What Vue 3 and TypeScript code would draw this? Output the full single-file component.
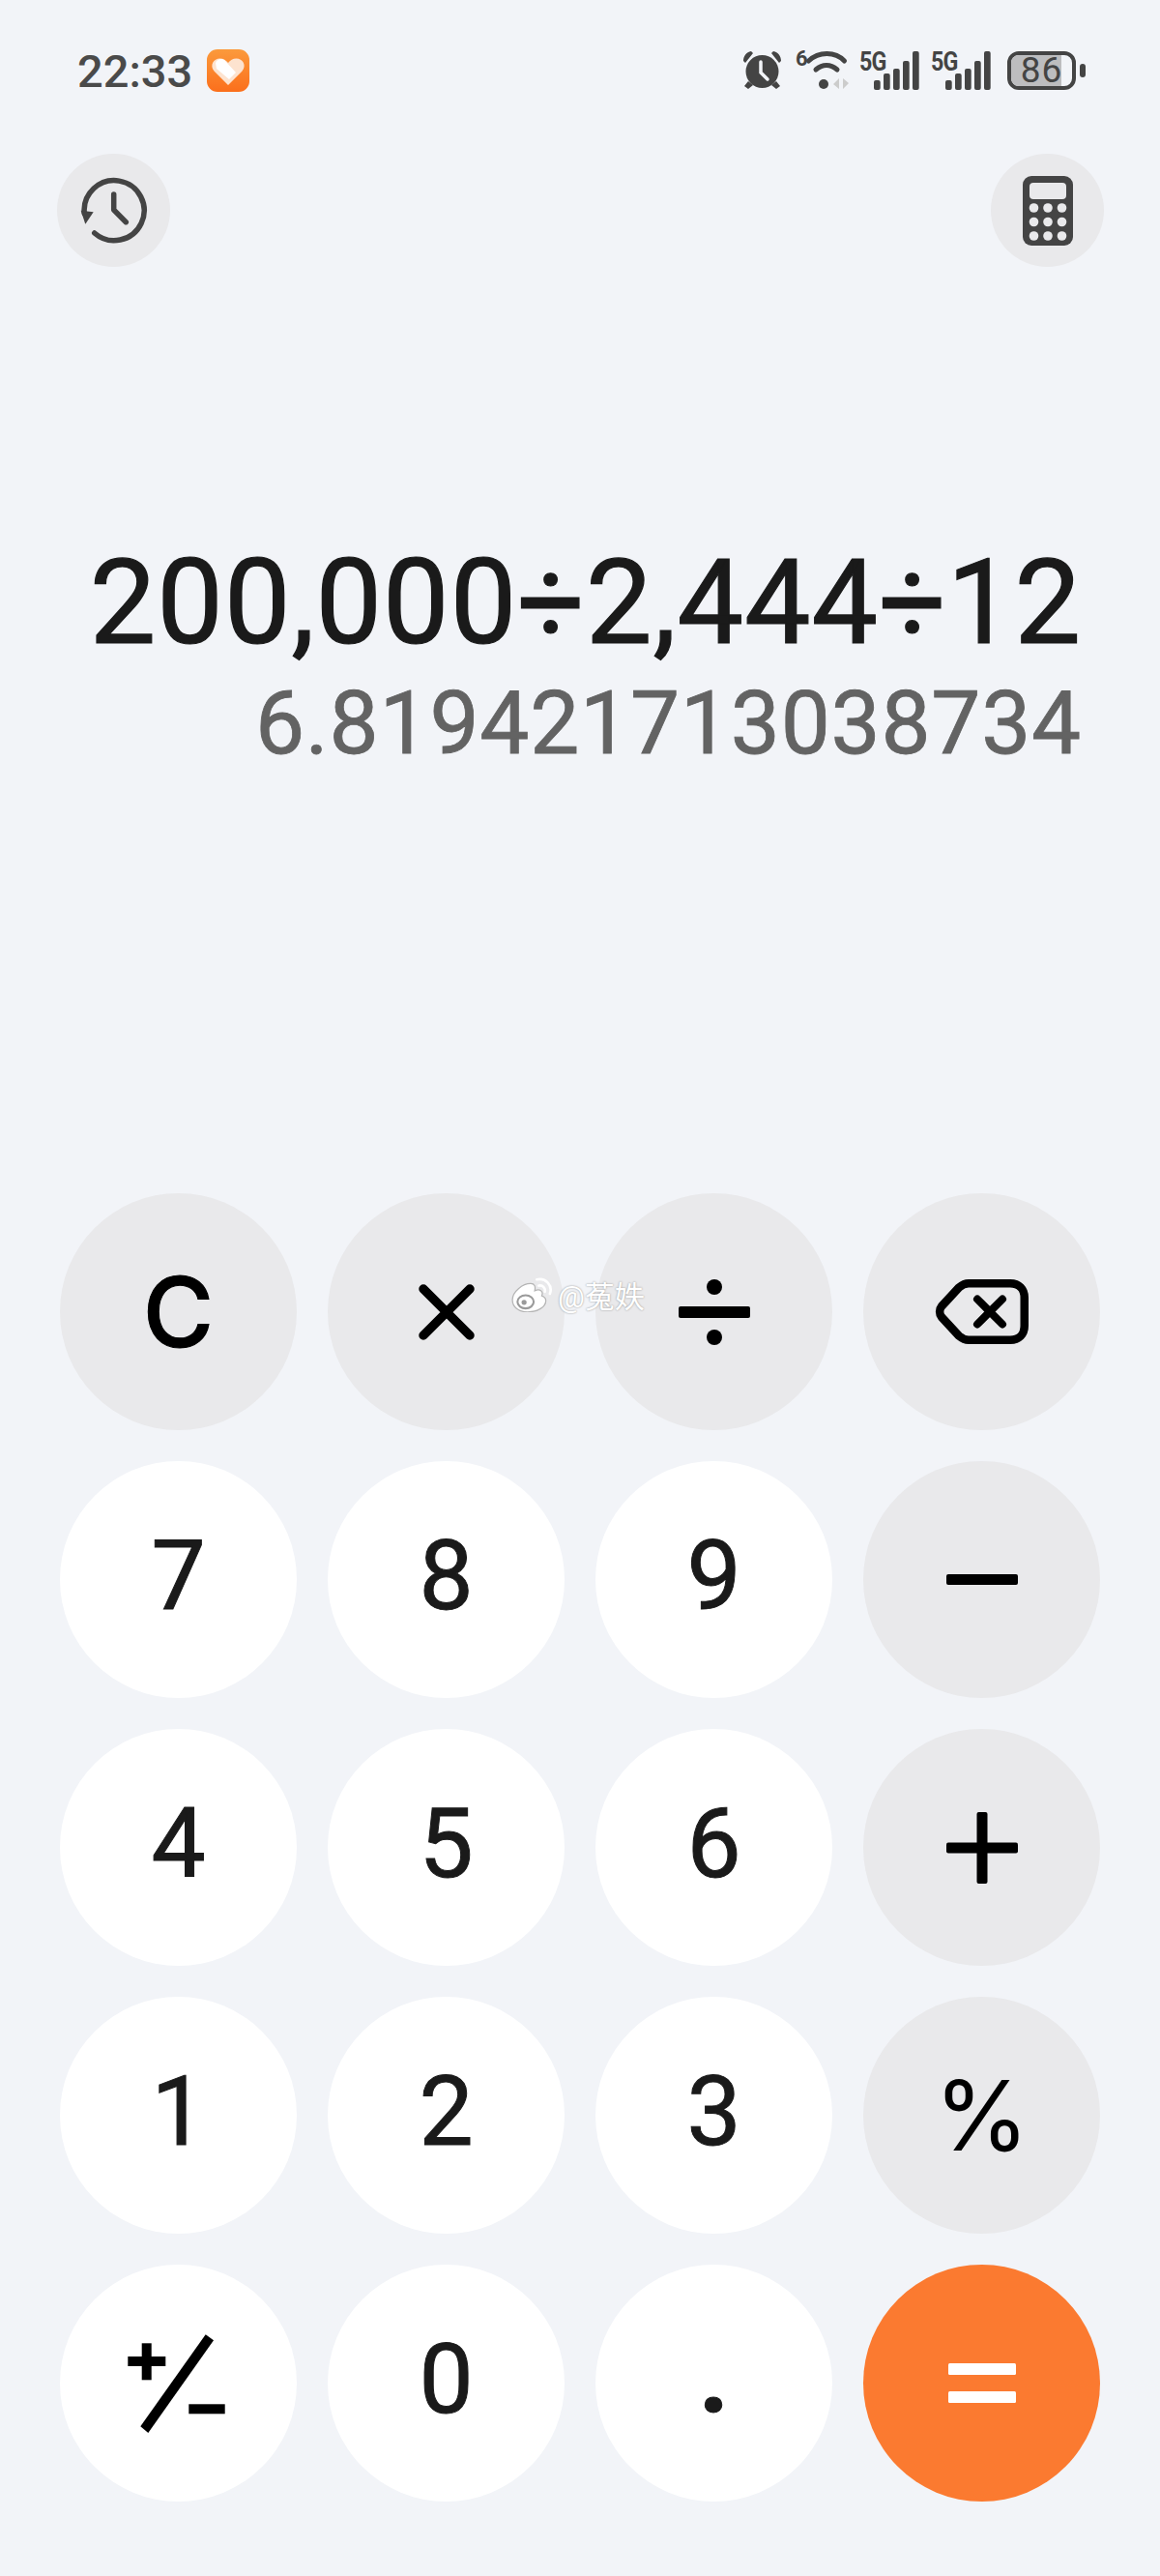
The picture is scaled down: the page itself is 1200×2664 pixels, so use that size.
<script setup lang="ts">
interface Key {
  label: string
  kind: 'num' | 'op' | 'eq'
  icon?: string
  font?: string
}

const keys: Key[] = [
  { label: 'C', kind: 'op', font: 'inter clear' },
  { label: '', kind: 'op', icon: 'times' },
  { label: '', kind: 'op', icon: 'divide' },
  { label: '', kind: 'op', icon: 'back' },
  { label: '7', kind: 'num' },
  { label: '8', kind: 'num' },
  { label: '9', kind: 'num' },
  { label: '', kind: 'op', icon: 'minus' },
  { label: '4', kind: 'num' },
  { label: '5', kind: 'num' },
  { label: '6', kind: 'num' },
  { label: '', kind: 'op', icon: 'plus' },
  { label: '1', kind: 'num' },
  { label: '2', kind: 'num' },
  { label: '3', kind: 'num' },
  { label: '%', kind: 'op', font: 'inter' },
  { label: '', kind: 'num', icon: 'sign' },
  { label: '0', kind: 'num' },
  { label: '.', kind: 'num', font: 'dot' },
  { label: '', kind: 'eq', icon: 'equals' }
]
</script>

<template>
  <div class="screen">
    <div class="status">
      <div class="status-left">
        <span class="time">22:33</span>
        <svg width="44" height="44" viewBox="0 0 44 44">
          <defs>
            <linearGradient id="hg" x1="0" y1="0" x2="0" y2="1">
              <stop offset="0" stop-color="#fb9a3c" />
              <stop offset="1" stop-color="#fb6f1c" />
            </linearGradient>
          </defs>
          <rect width="44" height="44" rx="11" fill="url(#hg)" />
          <path d="M22 37 L7.500 22.500 C2.500 16.500 7 9.500 13.500 9.500 C17 9.500 20 11.500 22 14 C24 11.500 27 9.500 30.500 9.500 C37 9.500 41.500 16.500 36.500 22.500 Z" fill="#fde3cf" />
          <path d="M9 14 C11 9.500 16 9 19 12 L30 24 L23 31 L10 20 Z" fill="#fff" />
        </svg>
      </div>
      <div class="status-right">
        <svg class="alarm" width="41" height="40" viewBox="0 0 41 40" fill="#444">
          <circle cx="20.500" cy="21" r="17" />
          <path d="M1 10 C1 5 4 1 9 0 L11 2 L3 12 Z M40 10 C40 5 37 1 32 0 L30 2 L38 12 Z" />
          <path d="M6 31 L2 36 L6 39 L11 35 Z M35 31 L39 36 L35 39 L30 35 Z" />
          <path d="M19 11 V22 L26 29" fill="none" stroke="#f2f4f8" stroke-width="3.500" stroke-linecap="round" />
        </svg>
        <svg class="wifi" width="56" height="48" viewBox="0 -6 56 48" fill="none">
          <text x="0" y="17" class="mini">6</text>
          <path d="M13.500 12 C24 2 41 2 50.500 12" stroke="#444" stroke-width="5" stroke-linecap="round" />
          <path d="M21 21 C28 15 36 15 43 21" stroke="#444" stroke-width="5" stroke-linecap="round" />
          <circle cx="29" cy="36" r="5" fill="#444" />
          <path d="M45 30 V41 L39 36 Z M49 30 V41 L55 35 Z" fill="#ccc" />
        </svg>
        <div class="sim">
          <span class="five-g">5G</span>
          <svg width="47" height="40" viewBox="0 0 47 40" fill="#444">
            <rect x="0" y="30" width="6.700" height="10" rx="2" />
            <rect x="10" y="23" width="6.700" height="17" rx="2" />
            <rect x="20" y="18" width="6.700" height="22" rx="2" />
            <rect x="30" y="10" width="6.700" height="30" rx="2" />
            <rect x="40" y="0" width="6.700" height="40" rx="2" />
          </svg>
        </div>
        <div class="sim">
          <span class="five-g">5G</span>
          <svg width="47" height="40" viewBox="0 0 47 40" fill="#444">
            <rect x="0" y="30" width="6.700" height="10" rx="2" />
            <rect x="10" y="23" width="6.700" height="17" rx="2" />
            <rect x="20" y="18" width="6.700" height="22" rx="2" />
            <rect x="30" y="10" width="6.700" height="30" rx="2" />
            <rect x="40" y="0" width="6.700" height="40" rx="2" />
          </svg>
        </div>
        <div class="battery">
          <div class="battery-body">
            <div class="battery-fill"></div>
            <span class="battery-text">86</span>
          </div>
          <div class="battery-cap"></div>
        </div>
      </div>
    </div>

    <div class="top-actions">
      <button class="round-btn">
        <svg width="70" height="70" viewBox="0 0 70 70" fill="none" stroke="#444" stroke-width="5.500">
          <path d="M14.700 58 A31 31 0 1 0 4.300 38" stroke-linecap="round" />
          <path d="M0.700 34.700 L13.700 36.300 L5.300 48.700 Z" fill="#444" stroke="none" />
          <path d="M34.700 18 V34 L47.300 46.700" stroke-linecap="round" stroke-linejoin="round" />
        </svg>
      </button>
      <button class="round-btn">
        <svg width="52" height="72" viewBox="0 0 52 72">
          <rect width="52" height="72" rx="9" fill="#444" />
          <rect x="7" y="7" width="38" height="17" rx="4" fill="#e9e9eb" />
          <g fill="#e9e9eb">
            <circle cx="11.500" cy="33" r="4.800" /><circle cx="26" cy="33" r="4.800" /><circle cx="40.500" cy="33" r="4.800" />
            <circle cx="11.500" cy="47.500" r="4.800" /><circle cx="26" cy="47.500" r="4.800" /><circle cx="40.500" cy="47.500" r="4.800" />
            <circle cx="11.500" cy="62" r="4.800" /><circle cx="26" cy="62" r="4.800" /><circle cx="40.500" cy="62" r="4.800" />
          </g>
        </svg>
      </button>
    </div>

    <div class="display">
      <div class="expr">200,000÷2,444÷12</div>
      <div class="result">6.819421713038734</div>
    </div>

    <div class="pad">
      <button v-for="(key, i) in keys" :key="i" class="key" :class="[key.kind, key.font]">
        <template v-if="key.label">{{ key.label }}</template>
        <svg v-else-if="key.icon === 'times'" width="58" height="60" viewBox="0 0 58 60" stroke="#000" stroke-width="9.500" stroke-linecap="round">
          <path d="M5 6 L53 54 M53 6 L5 54" />
        </svg>
        <svg v-else-if="key.icon === 'divide'" width="74" height="68" viewBox="0 0 74 68" fill="#000">
          <circle cx="37" cy="8" r="8" />
          <rect x="0" y="28" width="74" height="12" rx="2" />
          <circle cx="37" cy="60" r="8" />
        </svg>
        <svg v-else-if="key.icon === 'back'" width="97" height="67" viewBox="0 0 97 67" fill="none" stroke="#000" stroke-width="8.500" stroke-linejoin="round">
          <path d="M35 4.250 H78 C87 4.250 92.750 10 92.750 19 V48 C92.750 57 87 62.750 78 62.750 H35 C31 62.750 28 61 25 58.500 L7 39 C4.500 36 4.500 31 7 28 L25 8.500 C28 6 31 4.250 35 4.250 Z" />
          <path d="M44 20.500 L70 46.500 M70 20.500 L44 46.500" stroke-width="8" stroke-linecap="round" />
        </svg>
        <svg v-else-if="key.icon === 'minus'" width="74" height="11" viewBox="0 0 74 11" fill="#000">
          <rect width="74" height="11" rx="2" />
        </svg>
        <svg v-else-if="key.icon === 'plus'" width="74" height="74" viewBox="0 0 74 74" fill="#000">
          <rect y="31.500" width="74" height="11" rx="2" />
          <rect x="31.500" width="11" height="74" rx="2" />
        </svg>
        <svg v-else-if="key.icon === 'sign'" width="106" height="102" viewBox="0 0 106 102" fill="#000">
          <rect x="0.300" y="23" width="39" height="10" />
          <rect x="14.700" y="9.300" width="10" height="38" />
          <path d="M80.700 0.300 L89 6.300 L21.300 102 L13.300 95.300 Z" />
          <rect x="63.300" y="72.300" width="37.400" height="10" />
        </svg>
        <svg v-else-if="key.icon === 'equals'" width="70" height="41" viewBox="0 0 70 41" fill="#fff">
          <rect width="70" height="12" rx="1.500" />
          <rect y="29" width="70" height="12" rx="1.500" />
        </svg>
      </button>
      <div class="watermark">
        <svg width="44" height="36" viewBox="0 0 42 34">
          <path d="M2 22 C2 14 12 6 20 6 C24 6 25 9 24 13 C29 11 33 13 31 18 C34 19 35 21 35 23 C35 29 27 34 17 34 C8 34 2 29 2 22 Z" fill="#fff" stroke="#b5b5b5" stroke-width="1.200" />
          <ellipse cx="15" cy="24" rx="8" ry="6.500" fill="none" stroke="#9a9a9a" stroke-width="2" />
          <circle cx="13.500" cy="24.500" r="2.500" fill="#9a9a9a" />
          <path d="M26 2 C35 0 42 8 39 16 M28 8 C32 7 35 11 34 14" fill="none" stroke="#fff" stroke-width="2.500" stroke-linecap="round" />
        </svg>
        <span>@菟妷</span>
      </div>
    </div>
  </div>
</template>

<style>
html, body {
  margin: 0;
  background: #f2f4f8;
}
</style>

<style scoped>
.screen {
  position: relative;
  width: 1200px;
  height: 2664px;
  background: #f2f4f8;
  font-family: Roboto, "Noto Sans CJK SC", sans-serif;
  color: #1a1a1a;
  overflow: hidden;
}

.status {
  height: 46px;
  padding: 50px 0 0 80px;
  display: flex;
  justify-content: space-between;
  align-items: center;
}

.status-left {
  display: flex;
  align-items: center;
  gap: 15px;
}

.time {
  font-size: 47px;
  font-weight: 500;
  color: #4a4a4a;
}

.status-right {
  display: flex;
  align-items: center;
  gap: 12px;
  padding-right: 77px;
}

.alarm {
  margin-right: 2px;
}

.wifi {
  margin-right: -2px;
  margin-top: -8px;
}

.mini {
  font: 700 22px Roboto, sans-serif;
  fill: #444;
}

.sim {
  position: relative;
  width: 62px;
  height: 40px;
  display: flex;
  justify-content: flex-end;
}

.five-g {
  position: absolute;
  left: 0;
  top: -5px;
  font-size: 27px;
  font-weight: 700;
  color: #444;
  letter-spacing: -1px;
  transform: scaleX(0.86);
  transform-origin: left top;
}

.battery {
  margin-left: 5px;
  display: flex;
  align-items: center;
  gap: 4px;
}

.battery-body {
  position: relative;
  width: 71px;
  height: 40px;
  box-sizing: border-box;
  border: 4px solid #444;
  border-radius: 12px;
}

.battery-fill {
  width: 83%;
  height: 100%;
  border-radius: 8px 0 0 8px;
  background: #bdbdbf;
}

.battery-text {
  position: absolute;
  top: -6px;
  left: 0;
  right: 0;
  text-align: center;
  font-size: 37px;
  line-height: 44px;
  color: #444;
  letter-spacing: 1px;
}

.battery-cap {
  width: 6px;
  height: 14px;
  border-radius: 3px;
  background: #444;
}

.top-actions {
  margin-top: 63px;
  padding: 0 58px 0 59px;
  display: flex;
  justify-content: space-between;
}

.round-btn {
  width: 117px;
  height: 117px;
  border: none;
  padding: 0;
  border-radius: 50%;
  background: #e9e9eb;
  display: flex;
  align-items: center;
  justify-content: center;
}

.display {
  margin-top: 276px;
  padding-right: 81px;
  text-align: right;
}

.expr {
  font-size: 122px;
  line-height: 143px;
  color: #1a1a1a;
  letter-spacing: 1px;
  -webkit-text-stroke: 1.200px #1a1a1a;
}

.result {
  font-size: 91px;
  line-height: 107px;
  color: #636363;
  letter-spacing: 0.750px;
  -webkit-text-stroke: 0.800px #636363;
}

.pad {
  position: absolute;
  top: 1234px;
  left: 62px;
  display: grid;
  grid-template-columns: repeat(4, 245px);
  grid-auto-rows: 245px;
  gap: 32px;
}

.key {
  border: none;
  padding: 0 0 8px;
  border-radius: 50%;
  display: flex;
  align-items: center;
  justify-content: center;
  font-family: inherit;
  font-size: 100px;
  color: #1a1a1a;
  -webkit-text-stroke: 1px currentColor;
}

.key:has(svg) {
  padding: 0;
}

.key.inter {
  font-family: Inter, sans-serif;
  padding: 0;
  -webkit-text-stroke: 0;
}

.key.clear {
  font-weight: 500;
  -webkit-text-stroke: 1px currentColor;
}

.key.dot {
  font-weight: 700;
  font-size: 110px;
  padding-bottom: 16px;
}

.key.num {
  background: #fff;
}

.key.op {
  background: #e9e9eb;
  color: #000;
}

.key.eq {
  background: #fb7a30;
}

.watermark {
  position: absolute;
  left: 466px;
  top: 82px;
  display: flex;
  align-items: center;
  gap: 5px;
  font-size: 31px;
  color: #fff;
  text-shadow: 0 0 2px #8a8a8a;
}
</style>
